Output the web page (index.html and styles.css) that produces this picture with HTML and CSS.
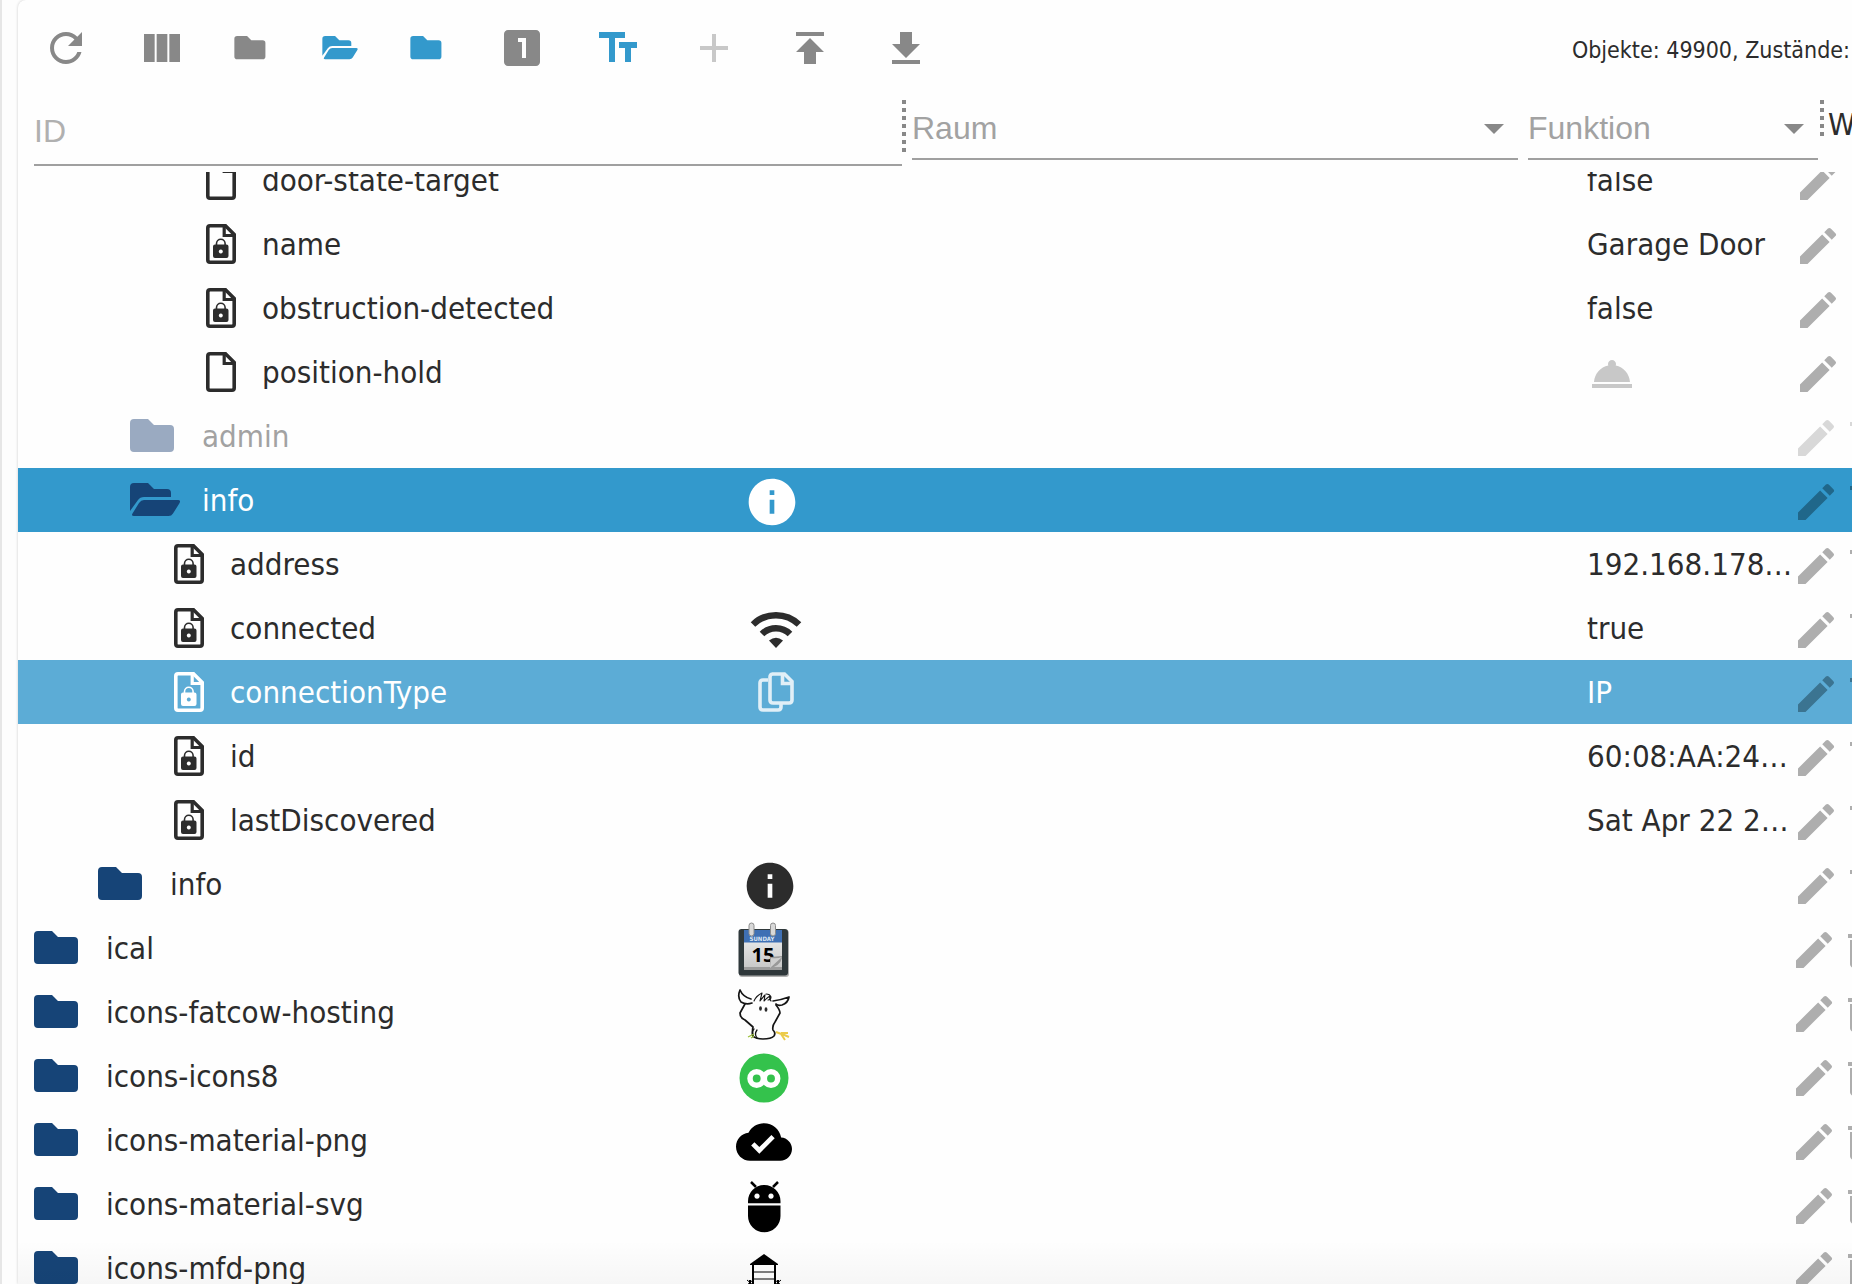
FILE: index.html
```html
<!DOCTYPE html>
<html lang="de">
<head>
<meta charset="utf-8">
<meta name="viewport" content="width=device-width, initial-scale=1">
<title>Objekte</title>
<link rel="stylesheet" href="styles.css">
</head>
<body>
<svg class="sprite" aria-hidden="true">
  <symbol id="folder" viewBox="0 0 50 34"><path d="M4 0h14l6 6h16q4 0 4 4v19q0 4-4 4H4q-4 0-4-4V4q0-4 4-4z"/></symbol>
  <symbol id="folder-open" viewBox="0 0 50 34"><path d="M0 28V4q0-4 4-4h14l6 6h13q4 0 4 4v4H14q-4 0-6 3z"/><path d="M14 17h34q3 0 1.600 3l-6.600 10.500q-1.500 2.500-4.500 2.500H4q-3 0-1.500-2.500L9 20q2-3 5-3z"/></symbol>
  <symbol id="file" viewBox="0 0 30 40"><path d="M4 1.800h15.500l8.700 8.700V36q0 2.200-2.200 2.200H4q-2.200 0-2.200-2.200V4q0-2.200 2.200-2.200z" fill="none" stroke="currentColor" stroke-width="3.600"/><path d="M18.200 2v9.500H28" fill="none" stroke="currentColor" stroke-width="3.200"/></symbol>
  <symbol id="file-lock" viewBox="0 0 30 40"><use href="#file"/><path d="M10.500 21v-1.500a4.300 4.300 0 0 1 8.600 0V21" fill="none" stroke="currentColor" stroke-width="1.600"/><path fill-rule="evenodd" d="M9 20.500h11.500q2 0 2 2v9.500q0 2-2 2H9q-2 0-2-2v-9.500q0-2 2-2zM14.800 25.500a2 2 0 1 0 .01 0z"/></symbol>
  <symbol id="edit" viewBox="0 0 24 24"><path d="M3 17.250V21h3.750L17.810 9.940l-3.750-3.750L3 17.250zM20.710 7.040a1 1 0 0 0 0-1.410l-2.340-2.340a1 1 0 0 0-1.410 0l-1.830 1.830 3.750 3.750 1.830-1.830z"/></symbol>
  <symbol id="trash" viewBox="0 0 24 24"><path d="M6 19c0 1.100.9 2 2 2h8c1.100 0 2-.9 2-2V7H6v12zM19 4h-3.500l-1-1h-5l-1 1H5v2h14V4z"/></symbol>
  <symbol id="info" viewBox="0 0 24 24"><path d="M12 2C6.480 2 2 6.480 2 12s4.480 10 10 10 10-4.480 10-10S17.520 2 12 2zm1 15h-2v-6h2v6zm0-8h-2V7h2v2z"/></symbol>
</svg>

<main class="panel">
  <header class="toolbar">
    <button class="tool" aria-label="Aktualisieren"><svg class="i48" viewBox="0 0 24 24"><path d="M17.650 6.350C16.200 4.900 14.210 4 12 4c-4.420 0-7.990 3.580-7.990 8s3.570 8 7.990 8c3.730 0 6.840-2.550 7.730-6h-2.080c-.82 2.330-3.040 4-5.650 4-3.310 0-6-2.690-6-6s2.690-6 6-6c1.660 0 3.140.69 4.220 1.780L13 11h7V4l-2.350 2.350z"/></svg></button>
    <button class="tool" aria-label="Spalten"><svg class="i48" viewBox="0 0 24 24"><path d="M14.670 5v14H9.330V5h5.340zm1 14H21V5h-5.330v14zm-7.340 0V5H3v14h5.330z"/></svg></button>
    <button class="tool tool-folder" aria-label="Alle zuklappen"><svg class="i-small"><use href="#folder"/></svg></button>
    <button class="tool tool-folder blue" aria-label="Alle aufklappen"><svg class="i-small"><use href="#folder-open"/></svg></button>
    <button class="tool tool-folder blue" aria-label="Ebene zuklappen"><svg class="i-small"><use href="#folder"/></svg></button>
    <button class="tool" aria-label="Ebene 1"><svg class="i48" viewBox="0 0 24 24"><path d="M19 3H5c-1.100 0-2 .9-2 2v14c0 1.100.9 2 2 2h14c1.100 0 2-.9 2-2V5c0-1.100-.9-2-2-2zm-5 14h-2V9h-2V7h4v10z"/></svg></button>
    <button class="tool blue" aria-label="Beschreibung"><svg class="i48" viewBox="0 0 24 24"><path d="M2.500 4v3h5v12h3V7h5V4h-13zm19 5h-9v3h3v7h3v-7h3V9z"/></svg></button>
    <button class="tool off" aria-label="Hinzufügen" disabled><svg class="i48" viewBox="0 0 24 24"><path d="M19 13h-6v6h-2v-6H5v-2h6V5h2v6h6v2z"/></svg></button>
    <button class="tool" aria-label="Hochladen"><svg class="i48" viewBox="0 0 24 24"><path d="M5 4v2h14V4H5zm0 10h4v6h6v-6h4l-7-7-7 7z"/></svg></button>
    <button class="tool" aria-label="Herunterladen"><svg class="i48" viewBox="0 0 24 24"><path d="M19 10h-4V4H9v6H5l7 7 7-7zM5 18v2h14v-2H5z"/></svg></button>
    <p class="status">Objekte: 49900, Zustände:</p>
  </header>

  <div class="filters">
    <input class="field field-id" type="text" placeholder="ID" aria-label="ID">
    <span class="grip"></span>
    <div class="picker">
      <select class="field" aria-label="Raum"><option>Raum</option></select>
      <svg class="arrow" viewBox="0 0 20 10"><path d="M0 0h20L10 10z"/></svg>
    </div>
    <span></span>
    <div class="picker">
      <select class="field" aria-label="Funktion"><option>Funktion</option></select>
      <svg class="arrow" viewBox="0 0 20 10"><path d="M0 0h20L10 10z"/></svg>
    </div>
    <span class="grip grip-short"></span>
    <span class="value-head">Wert</span>
  </div>

  <div class="list">
    <table class="tree">
      <colgroup><col class="c-name"><col class="c-icon"><col><col class="c-value"><col class="c-act"></colgroup>
      <tbody>
      <tr class="d5"><td class="name"><div class="node"><svg class="i-file"><use href="#file"/></svg>door-state-target</div></td><td class="pic"></td><td></td><td class="value">false</td><td class="act"><div class="acts"><button aria-label="Bearbeiten"><svg class="i48"><use href="#edit"/></svg></button></div></td></tr>
      <tr class="d5"><td class="name"><div class="node"><svg class="i-file"><use href="#file-lock"/></svg>name</div></td><td class="pic"></td><td></td><td class="value">Garage Door</td><td class="act"><div class="acts"><button aria-label="Bearbeiten"><svg class="i48"><use href="#edit"/></svg></button></div></td></tr>
      <tr class="d5"><td class="name"><div class="node"><svg class="i-file"><use href="#file-lock"/></svg>obstruction-detected</div></td><td class="pic"></td><td></td><td class="value">false</td><td class="act"><div class="acts"><button aria-label="Bearbeiten"><svg class="i48"><use href="#edit"/></svg></button></div></td></tr>
      <tr class="d5"><td class="name"><div class="node"><svg class="i-file"><use href="#file"/></svg>position-hold</div></td><td class="pic"></td><td></td><td class="value value-button"><svg class="i48 bell" viewBox="0 0 24 24"><path d="M2 17h20v2H2zm11.840-9.210c.1-.24.16-.51.16-.79 0-1.100-.9-2-2-2s-2 .9-2 2c0 .28.06.55.16.79C6.250 8.600 3.270 11.930 3 16h18c-.27-4.070-3.250-7.400-7.160-8.210z"/></svg></td><td class="act"><div class="acts"><button aria-label="Bearbeiten"><svg class="i48"><use href="#edit"/></svg></button></div></td></tr>
      <tr class="d3 dim"><td class="name"><div class="node"><svg class="i-folder"><use href="#folder"/></svg>admin</div></td><td class="pic"></td><td></td><td class="value"></td><td class="act"><div class="acts"><button aria-label="Bearbeiten"><svg class="i48"><use href="#edit"/></svg></button><button aria-label="Löschen"><svg class="i48"><use href="#trash"/></svg></button></div></td></tr>
      <tr class="d3 selected"><td class="name"><div class="node"><svg class="i-folder"><use href="#folder-open"/></svg>info</div></td><td class="pic"><svg class="i56"><use href="#info"/></svg></td><td></td><td class="value"></td><td class="act"><div class="acts"><button aria-label="Bearbeiten"><svg class="i48"><use href="#edit"/></svg></button><button aria-label="Löschen"><svg class="i48"><use href="#trash"/></svg></button></div></td></tr>
      <tr class="d4"><td class="name"><div class="node"><svg class="i-file"><use href="#file-lock"/></svg>address</div></td><td class="pic"></td><td></td><td class="value">192.168.178…</td><td class="act"><div class="acts"><button aria-label="Bearbeiten"><svg class="i48"><use href="#edit"/></svg></button><button aria-label="Löschen"><svg class="i48"><use href="#trash"/></svg></button></div></td></tr>
      <tr class="d4"><td class="name"><div class="node"><svg class="i-file"><use href="#file-lock"/></svg>connected</div></td><td class="pic"><svg class="i56" viewBox="0 0 56 56"><path fill="none" stroke="currentColor" stroke-width="6.500" d="M5 22.500a33 33 0 0 1 46 0M14 32a20 20 0 0 1 28 0"/><path d="M28 46l-7-7.500q7-5.500 14 0z"/></svg></td><td></td><td class="value">true</td><td class="act"><div class="acts"><button aria-label="Bearbeiten"><svg class="i48"><use href="#edit"/></svg></button><button aria-label="Löschen"><svg class="i48"><use href="#trash"/></svg></button></div></td></tr>
      <tr class="d4 hovered"><td class="name"><div class="node"><svg class="i-file"><use href="#file-lock"/></svg>connectionType</div></td><td class="pic"><svg class="i56 copy" viewBox="0 0 56 56"><g fill="none" stroke="currentColor" stroke-width="3.600"><path d="M20 14h-5q-3 0-3 3v24q0 3 3 3h15q3 0 3-3v-5"/><path d="M24 8h12.500l7.500 7.500V34q0 3-3 3H25q-3 0-3-3V11q0-3 3-3z"/><path d="M34.500 8v9.500H44"/></g></svg></td><td></td><td class="value">IP</td><td class="act"><div class="acts"><button aria-label="Bearbeiten"><svg class="i48"><use href="#edit"/></svg></button><button aria-label="Löschen"><svg class="i48"><use href="#trash"/></svg></button></div></td></tr>
      <tr class="d4"><td class="name"><div class="node"><svg class="i-file"><use href="#file-lock"/></svg>id</div></td><td class="pic"></td><td></td><td class="value">60:08:AA:24…</td><td class="act"><div class="acts"><button aria-label="Bearbeiten"><svg class="i48"><use href="#edit"/></svg></button><button aria-label="Löschen"><svg class="i48"><use href="#trash"/></svg></button></div></td></tr>
      <tr class="d4"><td class="name"><div class="node"><svg class="i-file"><use href="#file-lock"/></svg>lastDiscovered</div></td><td class="pic"></td><td></td><td class="value">Sat Apr 22 2…</td><td class="act"><div class="acts"><button aria-label="Bearbeiten"><svg class="i48"><use href="#edit"/></svg></button><button aria-label="Löschen"><svg class="i48"><use href="#trash"/></svg></button></div></td></tr>
      <tr class="d2"><td class="name"><div class="node"><svg class="i-folder"><use href="#folder"/></svg>info</div></td><td class="pic"><svg class="i56"><use href="#info"/></svg></td><td></td><td class="value"></td><td class="act"><div class="acts"><button aria-label="Bearbeiten"><svg class="i48"><use href="#edit"/></svg></button><button aria-label="Löschen"><svg class="i48"><use href="#trash"/></svg></button></div></td></tr>
      <tr class="d0"><td class="name"><div class="node"><svg class="i-folder"><use href="#folder"/></svg>ical</div></td><td class="pic"><svg class="i56" viewBox="0 0 56 56">
        <defs><linearGradient id="cal-page" x1="0" y1="0" x2="0" y2="1"><stop offset="0" stop-color="#f2f2f2"/><stop offset="1" stop-color="#c9c9c9"/></linearGradient></defs>
        <rect x="3" y="8" width="50" height="47" rx="3" fill="#b0b0b0"/><rect x="2.500" y="7" width="49.500" height="46.500" rx="3" fill="#2f383b"/>
        <rect x="8" y="8" width="38" height="40" fill="#9c9c9c"/><rect x="8" y="8" width="38" height="37" fill="url(#cal-page)"/><rect x="8" y="8" width="38" height="12.500" fill="#3f70b4"/>
        <text x="26" y="19" class="cal-day">SUNDAY</text><text x="27" y="40" class="cal-num">15</text>
        <path d="M46 34v2q-2 8-12 10V35z" fill="#999"/><path d="M34 46l1-10q6 1 11-1z" fill="#cfcfcf"/>
        <rect x="13" y="1" width="5" height="13" rx="2.500" fill="#d8d8d8" stroke="#8c8c8c"/><rect x="34.500" y="1" width="5" height="13" rx="2.500" fill="#d8d8d8" stroke="#8c8c8c"/></svg></td><td></td><td class="value"></td><td class="act"><div class="acts"><button aria-label="Bearbeiten"><svg class="i48"><use href="#edit"/></svg></button><button aria-label="Löschen"><svg class="i48"><use href="#trash"/></svg></button></div></td></tr>
      <tr class="d0"><td class="name"><div class="node"><svg class="i-folder"><use href="#folder"/></svg>icons-fatcow-hosting</div></td><td class="pic"><svg class="i56" viewBox="0 0 56 56"><g fill="none" stroke="#151515" stroke-width="1.700" stroke-linecap="round" stroke-linejoin="round"><path d="M15 13Q7 11 4 4q-3 7 1 12 5 3 11 1M37 15q8-1 16-4-1 6-7 8-4 1-6-1"/><path d="M9 18l-5 9q0 5 5 7l8 7q-1 4 0 9 3 3 10 3 8 0 11-3 2-3-1-6-1-4 2-8l5-9q0-3-4-8"/><path d="M18 15q2-5 8-8l-2 8q3-4 5-6l-1 6q4-4 6-5-1 3 1 5M30 8q4 0 5 3 0 3-3 3" stroke-width="1.100"/><path d="M18 43q-3 3-1 8M21 44q-3 4 0 8" stroke-width="1.300"/></g><ellipse cx="24.500" cy="22.500" rx="1.400" ry="2.200"/><ellipse cx="30" cy="23.500" rx="1.400" ry="2.200"/><path d="M12 51l6-3M15 52l3-2" stroke="#9abf3c" stroke-width="1.300"/><path d="M40 46l8 3M45 47l7 0M45 48l4 6M46 48l7 3" stroke="#eccb4a" stroke-width="2" fill="none"/></svg></td><td></td><td class="value"></td><td class="act"><div class="acts"><button aria-label="Bearbeiten"><svg class="i48"><use href="#edit"/></svg></button><button aria-label="Löschen"><svg class="i48"><use href="#trash"/></svg></button></div></td></tr>
      <tr class="d0"><td class="name"><div class="node"><svg class="i-folder"><use href="#folder"/></svg>icons-icons8</div></td><td class="pic"><svg class="i56" viewBox="0 0 56 56"><circle cx="28" cy="28" r="24.500" fill="#34c24c"/><g fill="none" stroke="#fff" stroke-width="5.500"><circle cx="20.700" cy="28.500" r="6.700"/><circle cx="35" cy="28.500" r="6.700"/></g></svg></td><td></td><td class="value"></td><td class="act"><div class="acts"><button aria-label="Bearbeiten"><svg class="i48"><use href="#edit"/></svg></button><button aria-label="Löschen"><svg class="i48"><use href="#trash"/></svg></button></div></td></tr>
      <tr class="d0"><td class="name"><div class="node"><svg class="i-folder"><use href="#folder"/></svg>icons-material-png</div></td><td class="pic"><svg class="i56 black" viewBox="0 0 24 24"><path d="M19.350 10.040C18.670 6.590 15.640 4 12 4 9.110 4 6.600 5.640 5.350 8.040 2.340 8.360 0 10.910 0 14c0 3.310 2.690 6 6 6h13c2.760 0 5-2.240 5-5 0-2.640-2.050-4.780-4.650-4.960zM10 17l-3.500-3.500 1.410-1.410L10 14.170 15.180 9l1.410 1.410L10 17z"/></svg></td><td></td><td class="value"></td><td class="act"><div class="acts"><button aria-label="Bearbeiten"><svg class="i48"><use href="#edit"/></svg></button><button aria-label="Löschen"><svg class="i48"><use href="#trash"/></svg></button></div></td></tr>
      <tr class="d0"><td class="name"><div class="node"><svg class="i-folder"><use href="#folder"/></svg>icons-material-svg</div></td><td class="pic"><svg class="i56 black" viewBox="0 0 56 56"><path d="M12 27.500V38a16.200 16.200 0 0 0 32.500 0V27.500z"/><path fill-rule="evenodd" d="M12 25.200v-2a16.200 16.200 0 0 1 32.500 0v2zM21 15.500a2.600 2.600 0 1 0 .01 0zM35 15.500a2.600 2.600 0 1 0 .01 0z"/><path d="M15 4l5 5M42 4l-5 5" stroke="#000" stroke-width="2.500"/></svg></td><td></td><td class="value"></td><td class="act"><div class="acts"><button aria-label="Bearbeiten"><svg class="i48"><use href="#edit"/></svg></button><button aria-label="Löschen"><svg class="i48"><use href="#trash"/></svg></button></div></td></tr>
      <tr class="d0"><td class="name"><div class="node"><svg class="i-folder"><use href="#folder"/></svg>icons-mfd-png</div></td><td class="pic"><svg class="i56 black" viewBox="0 0 56 56"><path d="M14 22L28 12l14 10v1H14z"/><path d="M17 23v33M39 23v33M14 38v18M42 38v18" stroke="#000" stroke-width="2" fill="none"/><path d="M17 30h22M17 37h22M11 38l6 5M11 43l6-5M39 38l6 5M39 43l6-5" stroke="#000" stroke-width="1" fill="none"/></svg></td><td></td><td class="value"></td><td class="act"><div class="acts"><button aria-label="Bearbeiten"><svg class="i48"><use href="#edit"/></svg></button><button aria-label="Löschen"><svg class="i48"><use href="#trash"/></svg></button></div></td></tr>
      </tbody>
    </table>
  </div>
</main>
</body>
</html>
```

FILE: styles.css
```css
* { box-sizing: border-box; }
body {
  margin: 0;
  height: 100vh;
  overflow: hidden;
  display: flex;
  padding-left: 16px;
  border-left: 2px solid #e6e6e6;
  background: #fdfdfd;
  color: #2c2c2c;
  font-family: "DejaVu Sans Condensed", "DejaVu Sans", sans-serif;
  font-size: 31px;
}
.sprite { position: absolute; width: 0; height: 0; }
svg { display: block; flex: none; fill: currentColor; }
button { border: 0; padding: 0; background: none; color: inherit; }

.panel {
  flex: 1;
  min-width: 0;
  display: flex;
  flex-direction: column;
  background: #fefefe;
  border-top-left-radius: 8px;
  box-shadow: 0 0 3px rgba(0, 0, 0, .2);
}

/* Toolbar */
.toolbar { display: flex; align-items: center; height: 96px; flex: none; color: #888; }
.tool { width: 96px; height: 96px; display: flex; align-items: center; justify-content: center; flex: none; }
.tool-folder { width: 88px; }
.blue { color: #3399cc; }
.off { color: #c8c8c8; }
.i48 { width: 48px; height: 48px; }
.i56 { width: 56px; height: 56px; }
.i-small { width: 36px; height: 24px; margin-right: 4px; }
.status { margin: 0 0 0 auto; padding: 4px 2px 0 0; font-size: 23px; color: #2c2c2c; white-space: nowrap; }

/* Column filters */
.filters {
  display: grid;
  grid-template-columns: 868fr 10px 606fr 10px 290fr 10px 24px;
  align-items: start;
  height: 76px;
  flex: none;
  padding-left: 16px;
}
.field {
  appearance: none;
  display: block;
  width: 100%;
  height: 64px;
  padding: 2px 0 0;
  border: 0;
  border-bottom: 2px solid #a0a0a0;
  border-radius: 0;
  outline: 0;
  background: none;
  color: #a2a2a2;
  font: 32px "Liberation Sans", Arial, sans-serif;
}
.field-id { height: 70px; }
.field::placeholder { color: #b0b0b0; opacity: 1; }
.picker { position: relative; }
.arrow { position: absolute; right: 14px; top: 28px; width: 20px; height: 10px; fill: #888; pointer-events: none; }
.grip {
  width: 4px;
  height: 56px;
  margin-top: 4px;
  background: repeating-linear-gradient(#888 0 4px, transparent 4px 8px);
}
.grip-short { height: 38px; margin-left: 2px; }
.value-head { overflow: hidden; line-height: 56px; }

/* Object tree */
.list { flex: 1; min-height: 0; overflow: hidden; position: relative; }
.list::after {
  content: "";
  position: absolute;
  inset: auto 0 0 0;
  height: 44px;
  background: linear-gradient(transparent, rgba(0, 0, 0, .03));
  pointer-events: none;
}
.tree { width: 100%; table-layout: fixed; border-collapse: collapse; margin-top: -24px; }
.c-name { width: 718px; }
.c-icon { width: 80px; }
.c-value { width: 206px; }
.c-act { width: 62px; }
.tree tr { height: 64px; }
.tree td { height: 64px; padding: 0; white-space: nowrap; overflow: hidden; vertical-align: middle; }
.node { display: flex; align-items: center; height: 64px; }
.i-folder { width: 50px; height: 34px; margin-right: 22px; color: #164477; }
.i-file { width: 30px; height: 40px; margin: 0 26px 0 12px; }
.tree .value { padding-left: 3px; }
.tree .value-button { padding: 4px 0 0 4px; }
.tree .pic, .tree .act { padding-top: 4px; }
.acts { display: flex; color: #aeaeae; }
.bell { color: #c8c8c8; }
.black { color: #000; }

.d0 .node { padding-left: 16px; }
.d2 .node { padding-left: 80px; }
.d3 .node { padding-left: 112px; }
.d4 .node { padding-left: 144px; }
.d5 .node { padding-left: 176px; }
.tree .d2 .pic { padding-left: 6px; }
.tree .d3 .pic { padding-left: 8px; }
.tree .d4 .pic { padding-left: 12px; }
.d2 .acts, .d3 .acts, .d4 .acts { padding-left: 2px; }
.d5 .acts { padding-left: 4px; }

.dim { color: #a2a2a2; }
.dim .i-folder { color: #9aaac1; }
.dim .acts { color: #d8d8d8; }
.selected { background: #3399cc; color: #fff; }
.selected .acts { color: #20678a; }
.hovered { background: #5cacd6; color: #fff; }
.hovered .acts { color: #3b7491; }
.copy { color: #e1eff7; }

.cal-day { font: bold 6px "DejaVu Sans Condensed", sans-serif; fill: #dce6f3; text-anchor: middle; }
.cal-num { font: bold 20px "Open Sans", sans-serif; fill: #000; text-anchor: middle; }
```
